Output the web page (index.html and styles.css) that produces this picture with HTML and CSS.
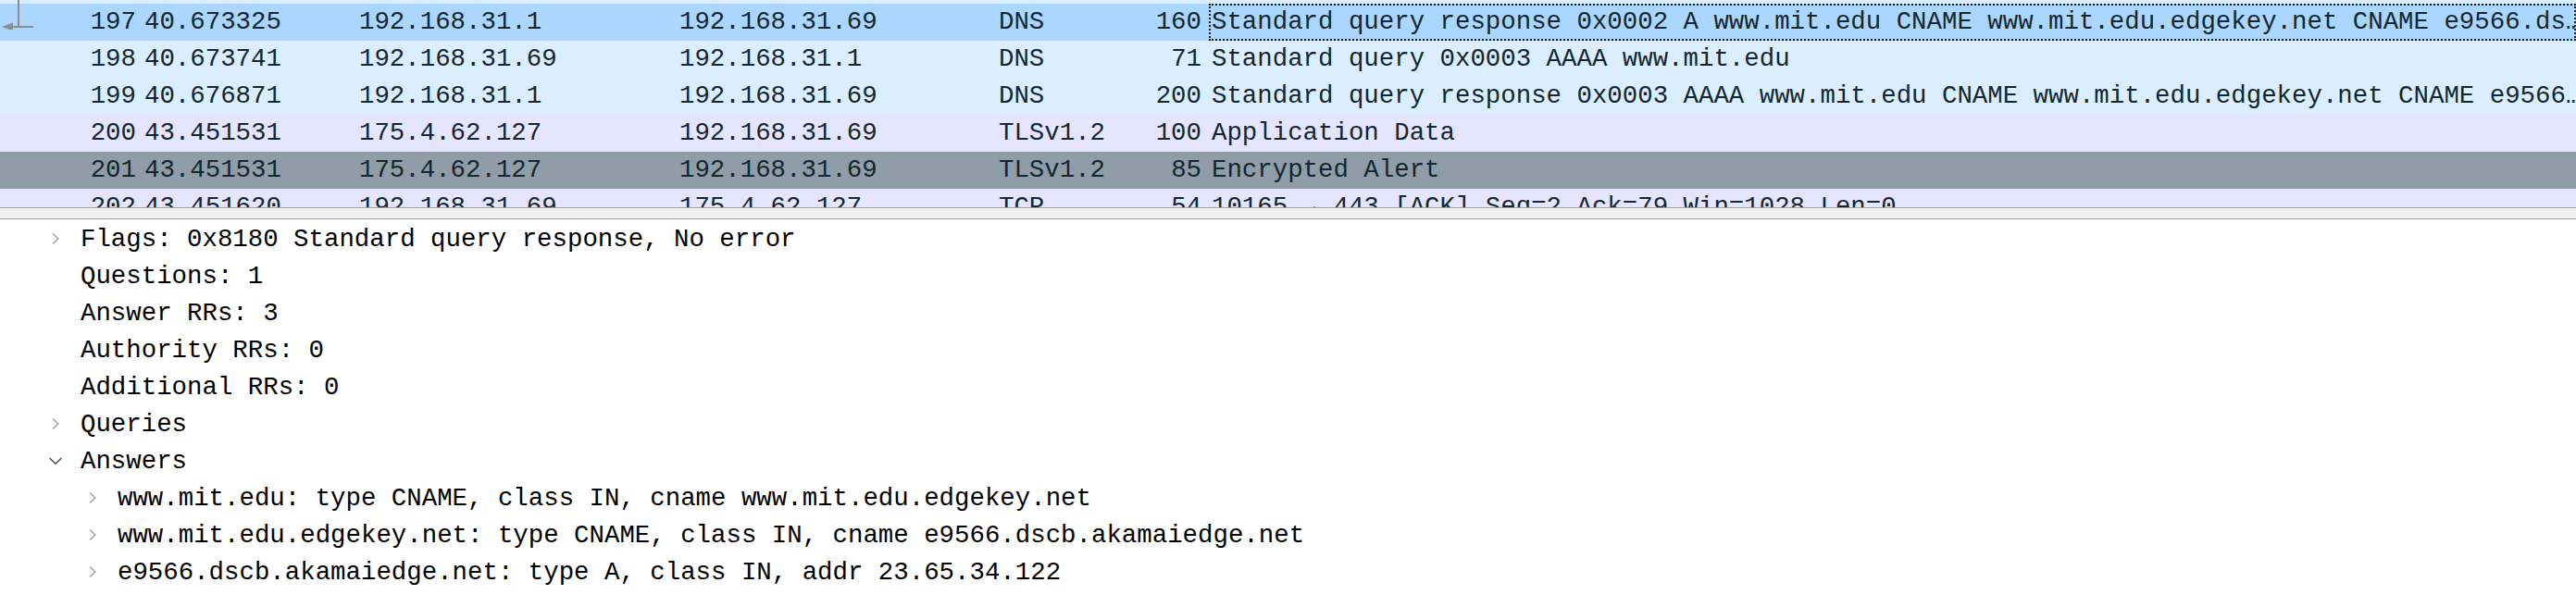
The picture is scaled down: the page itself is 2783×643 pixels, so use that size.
FILE: index.html
```html
<!DOCTYPE html>
<html>
<head>
<meta charset="utf-8">
<link rel="stylesheet" href="styles.css">
</head>
<body>
<div class="app">
  <div class="plist">
    <div class="prow udp partial"></div>
    <div class="prow sel">
      <div class="c no"><svg class="rel" width="40" height="32" viewBox="0 0 40 32"><path d="M20 0 V29 M36 29 H10" stroke="#8c8c8c" stroke-width="2" fill="none"/><path d="M2 29 L14 24.5 L14 33.5 Z" fill="#8c8c8c"/></svg>197</div>
      <div class="c">40.673325</div>
      <div class="c">192.168.31.1</div>
      <div class="c">192.168.31.69</div>
      <div class="c">DNS</div>
      <div class="c len">160</div>
      <div class="c info focus">Standard query response 0x0002 A www.mit.edu CNAME www.mit.edu.edgekey.net CNAME e9566.ds…</div>
    </div>
    <div class="prow udp">
      <div class="c no">198</div>
      <div class="c">40.673741</div>
      <div class="c">192.168.31.69</div>
      <div class="c">192.168.31.1</div>
      <div class="c">DNS</div>
      <div class="c len">71</div>
      <div class="c info">Standard query 0x0003 AAAA www.mit.edu</div>
    </div>
    <div class="prow udp">
      <div class="c no">199</div>
      <div class="c">40.676871</div>
      <div class="c">192.168.31.1</div>
      <div class="c">192.168.31.69</div>
      <div class="c">DNS</div>
      <div class="c len">200</div>
      <div class="c info">Standard query response 0x0003 AAAA www.mit.edu CNAME www.mit.edu.edgekey.net CNAME e9566…</div>
    </div>
    <div class="prow tcp">
      <div class="c no">200</div>
      <div class="c">43.451531</div>
      <div class="c">175.4.62.127</div>
      <div class="c">192.168.31.69</div>
      <div class="c">TLSv1.2</div>
      <div class="c len">100</div>
      <div class="c info">Application Data</div>
    </div>
    <div class="prow alert">
      <div class="c no">201</div>
      <div class="c">43.451531</div>
      <div class="c">175.4.62.127</div>
      <div class="c">192.168.31.69</div>
      <div class="c">TLSv1.2</div>
      <div class="c len">85</div>
      <div class="c info">Encrypted Alert</div>
    </div>
    <div class="prow tcp">
      <div class="c no">202</div>
      <div class="c">43.451620</div>
      <div class="c">192.168.31.69</div>
      <div class="c">175.4.62.127</div>
      <div class="c">TCP</div>
      <div class="c len">54</div>
      <div class="c info">10165 → 443 [ACK] Seq=2 Ack=79 Win=1028 Len=0</div>
    </div>
  </div>
  <div class="splitter"></div>
  <div class="details">
    <div class="drow l1"><span class="chev"><svg width="8" height="12" viewBox="0 0 8 12"><path d="M1 0.5 L7 6 L1 11.5" stroke="#9a9a9a" stroke-width="1.3" fill="none"/></svg></span><span class="t">Flags: 0x8180 Standard query response, No error</span></div>
    <div class="drow l1"><span class="chev"></span><span class="t">Questions: 1</span></div>
    <div class="drow l1"><span class="chev"></span><span class="t">Answer RRs: 3</span></div>
    <div class="drow l1"><span class="chev"></span><span class="t">Authority RRs: 0</span></div>
    <div class="drow l1"><span class="chev"></span><span class="t">Additional RRs: 0</span></div>
    <div class="drow l1"><span class="chev"><svg width="8" height="12" viewBox="0 0 8 12"><path d="M1 0.5 L7 6 L1 11.5" stroke="#9a9a9a" stroke-width="1.3" fill="none"/></svg></span><span class="t">Queries</span></div>
    <div class="drow l1"><span class="chev down"><svg width="14" height="8" viewBox="0 0 14 8"><path d="M0.5 1 L7 7 L13.5 1" stroke="#444" stroke-width="1.3" fill="none"/></svg></span><span class="t">Answers</span></div>
    <div class="drow l2"><span class="chev"><svg width="8" height="12" viewBox="0 0 8 12"><path d="M1 0.5 L7 6 L1 11.5" stroke="#9a9a9a" stroke-width="1.3" fill="none"/></svg></span><span class="t">www.mit.edu: type CNAME, class IN, cname www.mit.edu.edgekey.net</span></div>
    <div class="drow l2"><span class="chev"><svg width="8" height="12" viewBox="0 0 8 12"><path d="M1 0.5 L7 6 L1 11.5" stroke="#9a9a9a" stroke-width="1.3" fill="none"/></svg></span><span class="t">www.mit.edu.edgekey.net: type CNAME, class IN, cname e9566.dscb.akamaiedge.net</span></div>
    <div class="drow l2"><span class="chev"><svg width="8" height="12" viewBox="0 0 8 12"><path d="M1 0.5 L7 6 L1 11.5" stroke="#9a9a9a" stroke-width="1.3" fill="none"/></svg></span><span class="t">e9566.dscb.akamaiedge.net: type A, class IN, addr 23.65.34.122</span></div>
  </div>
</div>
</body>
</html>
```

FILE: styles.css
```css
html, body {
  margin: 0;
  padding: 0;
  background: #ffffff;
}
.app {
  width: 2783px;
  height: 643px;
  overflow: hidden;
  font-family: "Liberation Mono", "DejaVu Sans Mono", monospace;
  font-size: 27.4px;
}
.plist {
  height: 224px;
  overflow: hidden;
  border-bottom: 1px solid #a0a0a0;
  color: #12272e;
}
.prow {
  display: grid;
  grid-template-columns: 152px 232px 346px 345px 125px 106px 1fr;
  height: 40px;
  line-height: 40px;
  white-space: nowrap;
}
.prow.partial {
  height: 4px;
}
.udp { background: #daeeff; }
.sel { background: #abd6ff; }
.tcp { background: #e6e5ff; }
.alert { background: #909ca6; }
.c {
  padding-left: 4px;
  overflow: hidden;
  min-width: 0;
}
.c.no {
  text-align: right;
  padding-left: 0;
  padding-right: 5px;
  position: relative;
  overflow: visible;
}
.c.len {
  text-align: right;
  padding-left: 0;
  padding-right: 8px;
}
.c.info {
  padding-left: 3px;
}
.c.focus {
  outline: 2px dotted #1c1c1c;
  outline-offset: -2px;
}
.rel {
  position: absolute;
  left: 0;
  top: -4px;
}
.splitter {
  height: 11px;
  background: #f0f0f0;
  border-bottom: 1px solid #a0a0a0;
}
.details {
  padding-top: 1px;
  color: #000000;
}
.drow {
  display: flex;
  align-items: center;
  height: 40px;
  white-space: nowrap;
}
.drow.l1 { padding-left: 53px; }
.drow.l2 { padding-left: 93px; }
.chev {
  width: 34px;
  height: 40px;
  display: flex;
  align-items: center;
  padding-left: 3px;
  box-sizing: border-box;
}
.chev.down { padding-left: 0; }
```
